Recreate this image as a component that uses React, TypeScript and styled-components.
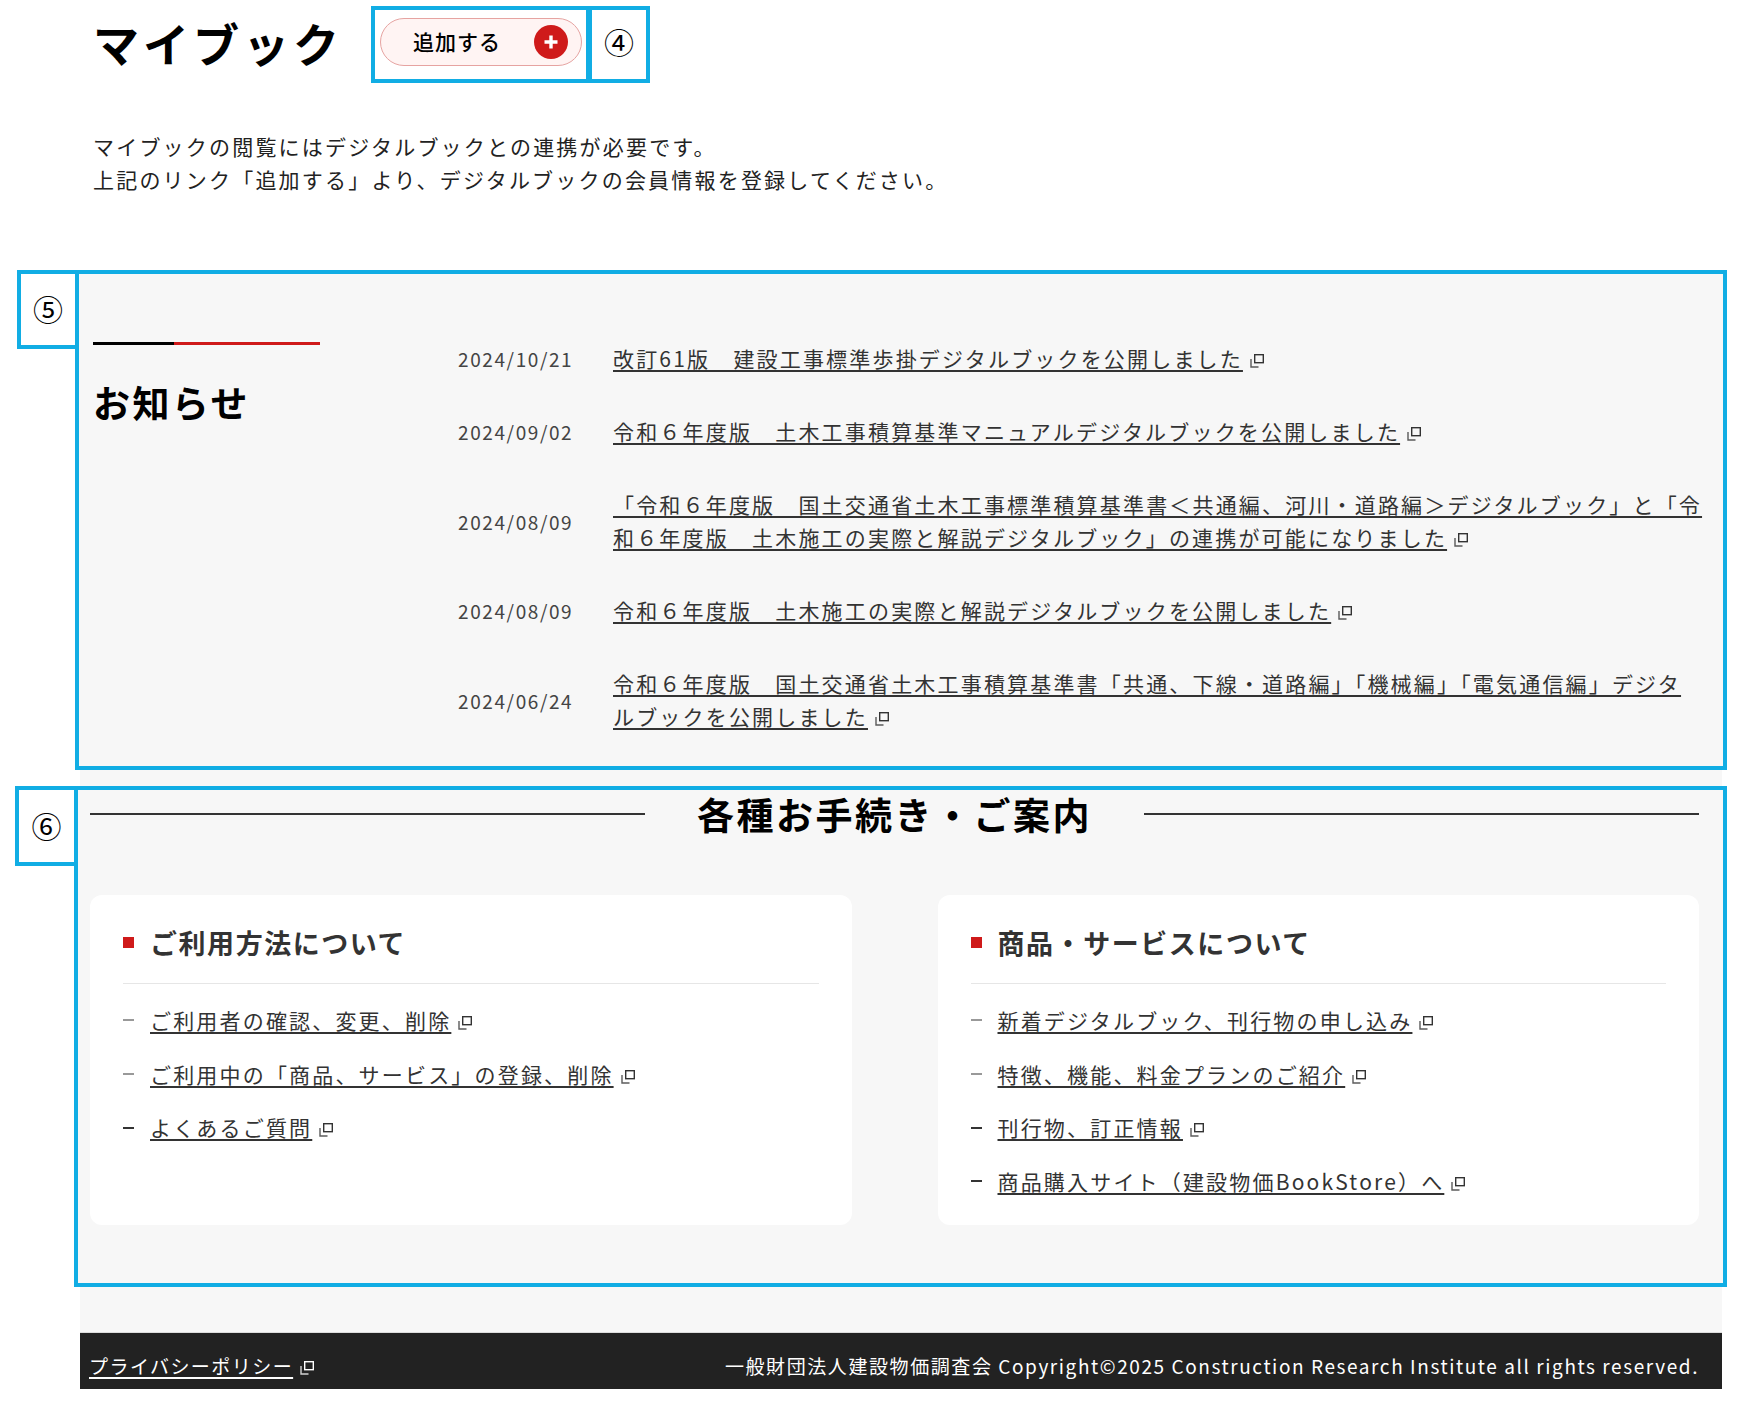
import * as React from "react";
import styled, { createGlobalStyle } from "styled-components";

const GlobalStyle = createGlobalStyle`
  html, body {
    margin: 0;
    padding: 0;
    background: #fff;
    color: #333;
    font-family: "Noto Sans CJK JP", "Noto Sans", sans-serif;
  }
  * {
    box-sizing: border-box;
  }
`;

const BLUE = "#11ade4";
const RED = "#cf1a1a";

const Page = styled.div`
  width: 1738px;
  padding: 6px 0 20px;
`;

const Intro = styled.header`
  padding-left: 93px;
`;

const TitleRow = styled.div`
  display: flex;
  align-items: flex-start;
`;

const PageTitle = styled.h1`
  width: 278px;
  margin: 0;
  font-size: 46px;
  line-height: 72px;
  font-weight: 700;
  letter-spacing: 4px;
  color: #000;
`;

const Frame = styled.div`
  display: flex;
  align-items: center;
  justify-content: center;
  height: 77px;
  padding-bottom: 6px;
  border: 4px solid ${BLUE};
`;

const ButtonFrame = styled(Frame)`
  width: 219px;
  padding-left: 5px;
  padding-right: 4px;
`;

const NumberFrame = styled(Frame)`
  width: 62px;
  margin-left: -2px;
`;

const Circled = styled.span`
  margin-top: -2px;
  font-size: 30px;
  line-height: 1;
  color: #000;
`;

const AddButton = styled.a`
  display: flex;
  align-items: center;
  justify-content: space-between;
  width: 202px;
  height: 48px;
  padding: 0 13px 2px 32px;
  border: 1px solid #e6a3a1;
  border-radius: 24px;
  background: #fff4f3;
  color: #000;
  font-size: 21px;
  font-weight: 500;
  letter-spacing: 1px;
  text-decoration: none;
`;

const PlusDot = styled.svg`
  width: 34px;
  height: 34px;
  margin-top: 2px;
`;

const IntroText = styled.p`
  margin: 47px 0 73px;
  font-size: 21px;
  line-height: 33.4px;
  letter-spacing: 2.2px;
  color: #222;
`;

const Column = styled.main`
  width: 1642px;
  margin-left: 80px;
  background: #f7f7f7;
`;

const Outlined = styled.section`
  position: relative;
  border: 4px solid ${BLUE};
  background: #f7f7f7;
`;

const NewsSection = styled(Outlined)`
  display: flex;
  margin: 0 -5px 16px -5px;
  padding: 68px 0 33px 14px;
`;

const GuideSection = styled(Outlined)`
  margin: 0 -5px 45px -6px;
  padding: 0 24px 58px 12px;
`;

const SideBadge = styled.div<{ $width: number; $height: number }>`
  position: absolute;
  top: -4px;
  left: -${(p) => p.$width}px;
  display: flex;
  align-items: center;
  justify-content: center;
  width: ${(p) => p.$width}px;
  height: ${(p) => p.$height}px;
  border: 4px solid ${BLUE};
  background: #fff;
`;

const NewsAside = styled.div`
  flex: 0 0 365px;
`;

const TwoToneRule = styled.div`
  width: 227px;
  height: 3px;
  background: linear-gradient(to right, #000 81px, ${RED} 81px);
`;

const NewsHeading = styled.h2`
  margin: 33px 0 0;
  font-size: 37px;
  line-height: 48px;
  font-weight: 700;
  letter-spacing: 2.4px;
  color: #000;
`;

const NewsList = styled.ul`
  flex: 1;
  display: flex;
  flex-direction: column;
  gap: 40px;
  margin: 0;
  padding: 0;
  list-style: none;
`;

const NewsRow = styled.li`
  display: grid;
  grid-template-columns: 155px 1090.5px;
  align-items: center;
`;

const NewsDate = styled.time`
  padding-top: 1px;
  font-size: 19px;
  letter-spacing: 1.6px;
  color: #444;
`;

const LinkLine = styled.div<{ $light?: boolean }>`
  font-size: ${(p) => (p.$light ? 19 : 21)}px;
  line-height: ${(p) => (p.$light ? 30 : 33)}px;
  letter-spacing: ${(p) => (p.$light ? 1.45 : 2.18)}px;
  color: ${(p) => (p.$light ? "#fff" : "#333")};

  a {
    color: inherit;
    text-decoration: underline;
    text-decoration-thickness: 1.5px;
    text-underline-offset: 3px;
  }
`;

const ExtIcon = styled.svg`
  display: inline-block;
  width: 14px;
  height: 14px;
  margin-left: 7px;
  vertical-align: -1px;
`;

const External = () => (
  <ExtIcon viewBox="0 0 14 14" fill="none" stroke="currentColor" strokeWidth="1.4">
    <rect x="4.7" y="0.7" width="8.6" height="8" />
    <path d="M1 5V13H8.5" opacity="0.8" />
  </ExtIcon>
);

const GuideHeadingRow = styled.div`
  display: flex;
  align-items: center;
  height: 50px;
`;

const HeadingRule = styled.span`
  flex: 1;
  height: 2px;
  margin-top: -2px;
  background: #333;
`;

const GuideHeading = styled.h2`
  margin: -2px 52px 0;
  font-size: 37px;
  line-height: 50px;
  font-weight: 700;
  letter-spacing: 2.5px;
  color: #000;
`;

const CardGrid = styled.div`
  display: grid;
  grid-template-columns: 1fr 1fr;
  gap: 86px;
  margin-top: 55px;
`;

const Card = styled.article`
  height: 330px;
  padding: 31px 33px 0;
  border-radius: 12px;
  background: #fff;
`;

const CardTitle = styled.h3`
  display: flex;
  align-items: center;
  gap: 16px;
  margin: 0;
  padding-bottom: 23px;
  border-bottom: 1px solid #e6e6e6;
  font-size: 27px;
  line-height: 34px;
  font-weight: 700;
  letter-spacing: 1.55px;
  color: #333;

  &::before {
    content: "";
    width: 11px;
    height: 11px;
    background: ${RED};
  }
`;

const GuideList = styled.ul`
  display: flex;
  flex-direction: column;
  gap: 20.7px;
  margin: 20px 0 0;
  padding: 0;
  list-style: none;
`;

const GuideItem = styled.li<{ $strong?: boolean }>`
  display: flex;
  align-items: center;
  gap: 16px;

  &::before {
    content: "";
    flex: 0 0 11px;
    height: 2px;
    background: ${(p) => (p.$strong ? "#333" : "#999")};
  }
`;

const Footer = styled.footer`
  display: flex;
  align-items: flex-end;
  justify-content: space-between;
  height: 57px;
  padding: 0 23px 8px 9px;
  border-top: 1px solid #ddd;
  background: #222;
`;

const FooterCopy = styled.small`
  font-size: 19px;
  line-height: 30px;
  letter-spacing: 1.58px;
  color: #fff;
`;

const news = [
  { date: "2024/10/21", title: "改訂61版　建設工事標準歩掛デジタルブックを公開しました" },
  { date: "2024/09/02", title: "令和６年度版　土木工事積算基準マニュアルデジタルブックを公開しました" },
  {
    date: "2024/08/09",
    title:
      "「令和６年度版　国土交通省土木工事標準積算基準書＜共通編、河川・道路編＞デジタルブック」と「令和６年度版　土木施工の実際と解説デジタルブック」の連携が可能になりました",
  },
  { date: "2024/08/09", title: "令和６年度版　土木施工の実際と解説デジタルブックを公開しました" },
  {
    date: "2024/06/24",
    title:
      "令和６年度版　国土交通省土木工事積算基準書「共通、下線・道路編」「機械編」「電気通信編」デジタルブックを公開しました",
  },
];

const usage = [
  { label: "ご利用者の確認、変更、削除" },
  { label: "ご利用中の「商品、サービス」の登録、削除" },
  { label: "よくあるご質問", strong: true },
];

const services = [
  { label: "新着デジタルブック、刊行物の申し込み" },
  { label: "特徴、機能、料金プランのご紹介" },
  { label: "刊行物、訂正情報", strong: true },
  { label: "商品購入サイト（建設物価BookStore）へ", strong: true },
];

const guides = [
  { title: "ご利用方法について", items: usage },
  { title: "商品・サービスについて", items: services },
];

const App: React.FunctionComponent = () => (
  <Page>
    <GlobalStyle />
    <Intro>
      <TitleRow>
        <PageTitle>マイブック</PageTitle>
        <ButtonFrame>
          <AddButton href="#">
            追加する
            <PlusDot viewBox="0 0 34 34">
              <circle cx="17" cy="17" r="17" fill={RED} />
              <path d="M17 10.5v13M10.5 17h13" stroke="#fff" strokeWidth="3.4" />
            </PlusDot>
          </AddButton>
        </ButtonFrame>
        <NumberFrame>
          <Circled>④</Circled>
        </NumberFrame>
      </TitleRow>
      <IntroText>
        マイブックの閲覧にはデジタルブックとの連携が必要です。
        <br />
        上記のリンク「追加する」より、デジタルブックの会員情報を登録してください。
      </IntroText>
    </Intro>

    <Column>
      <NewsSection>
        <SideBadge $width={62} $height={79}>
          <Circled>⑤</Circled>
        </SideBadge>
        <NewsAside>
          <TwoToneRule />
          <NewsHeading>お知らせ</NewsHeading>
        </NewsAside>
        <NewsList>
          {news.map((item) => (
            <NewsRow key={item.title}>
              <NewsDate>{item.date}</NewsDate>
              <LinkLine>
                <a href="#">{item.title}</a>
                <External />
              </LinkLine>
            </NewsRow>
          ))}
        </NewsList>
      </NewsSection>

      <GuideSection>
        <SideBadge $width={63} $height={80}>
          <Circled>⑥</Circled>
        </SideBadge>
        <GuideHeadingRow>
          <HeadingRule />
          <GuideHeading>各種お手続き・ご案内</GuideHeading>
          <HeadingRule />
        </GuideHeadingRow>
        <CardGrid>
          {guides.map((guide) => (
            <Card key={guide.title}>
              <CardTitle>{guide.title}</CardTitle>
              <GuideList>
                {guide.items.map((item) => (
                  <GuideItem key={item.label} $strong={item.strong}>
                    <LinkLine>
                      <a href="#">{item.label}</a>
                      <External />
                    </LinkLine>
                  </GuideItem>
                ))}
              </GuideList>
            </Card>
          ))}
        </CardGrid>
      </GuideSection>

      <Footer>
        <LinkLine $light>
          <a href="#">プライバシーポリシー</a>
          <External />
        </LinkLine>
        <FooterCopy>
          一般財団法人建設物価調査会 Copyright©2025 Construction Research Institute all rights reserved.
        </FooterCopy>
      </Footer>
    </Column>
  </Page>
);

export default App;
